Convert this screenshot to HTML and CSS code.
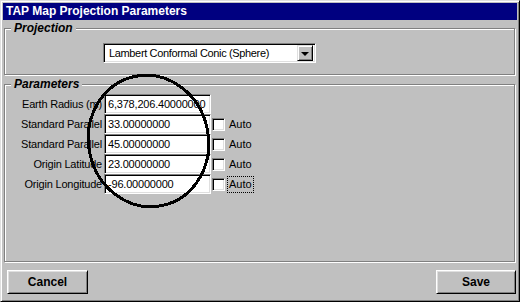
FILE: index.html
```html
<!DOCTYPE html>
<html lang="en">
<head>
  <meta charset="UTF-8">
  <title>TAP Map Projection Parameters</title>
  <link rel="stylesheet" href="styles.css">
</head>
<body>
  <div class="window">
    <div class="titlebar">TAP Map Projection Parameters</div>

    <!-- Projection -->
    <fieldset class="group group-projection">
      <legend>Projection</legend>
      <div class="combo">
        <span class="combo-text">Lambert Conformal Conic (Sphere)</span>
        <span class="combo-btn"><span class="arrow"></span></span>
      </div>
    </fieldset>

    <!-- Parameters -->
    <fieldset class="group group-params">
      <legend>Parameters</legend>
      <div class="param-grid">
        <label class="param-label">Earth Radius (m)</label>
        <input class="field" type="text" value="6,378,206.40000000" readonly>
        <span></span><span></span>

        <label class="param-label">Standard Parallel</label>
        <input class="field" type="text" value="33.00000000" readonly>
        <span class="check"></span><span class="check-label">Auto</span>

        <label class="param-label">Standard Parallel</label>
        <input class="field" type="text" value="45.00000000" readonly>
        <span class="check"></span><span class="check-label">Auto</span>

        <label class="param-label">Origin Latitude</label>
        <input class="field" type="text" value="23.00000000" readonly>
        <span class="check"></span><span class="check-label">Auto</span>

        <label class="param-label">Origin Longitude</label>
        <input class="field" type="text" value="-96.00000000" readonly>
        <span class="check"></span><span class="check-label focused">Auto</span>
      </div>
    </fieldset>

    <div class="actions">
      <button class="btn btn-cancel">Cancel</button>
      <button class="btn btn-save">Save</button>
    </div>

    <!-- hand drawn circle on top of the dialog -->
    <svg class="annotation" width="128" height="140" viewBox="0 0 128 140">
      <ellipse cx="62.5" cy="69" rx="60" ry="66" transform="rotate(-12 62.5 69)" fill="none" stroke="#000" stroke-width="3" shape-rendering="crispEdges"/>
    </svg>
  </div>
</body>
</html>
```

FILE: styles.css
```css
* {
  margin: 0;
  padding: 0;
  box-sizing: border-box;
}
body {
  font-family: 'Liberation Sans', Arial, sans-serif;
  font-size: 11px;
  background: #c0c0c0;
  color: #000;
}
.window {
  position: relative;
  width: 520px;
  height: 302px;
  display: flex;
  flex-direction: column;
  background: #c0c0c0;
  border: 1px solid;
  border-color: #dfdfdf #000 #000 #dfdfdf;
  box-shadow: inset 1px 1px 0 #fff, inset -1px -1px 0 #808080;
  padding: 2px;
}
.titlebar {
  height: 17px;
  line-height: 17px;
  padding-left: 3px;
  background: #000080;
  color: #fff;
  font-weight: bold;
  font-size: 12px;
}
.group {
  min-width: 0;
  margin: 0 2px 0 1px;
  border: 1px solid #808080;
  box-shadow: 1px 1px 0 #fff, inset 1px 1px 0 #fff;
}
.group legend {
  margin-left: 6px;
  padding: 0 3px;
  background: #c0c0c0;
  font-size: 12px;
  line-height: 14px;
  font-weight: bold;
  font-style: italic;
}
.group-projection {
  margin-top: 1px;
  padding: 8px 0 11px 0;
}
.group-params {
  flex: 1;
  margin-top: 2px;
  padding: 3px 0 0 0;
}

/* combo box */
.combo {
  display: flex;
  width: 213px;
  height: 20px;
  margin-left: 98px;
  background: #fff;
  border: 1px solid;
  border-color: #808080 #fff #fff #808080;
  box-shadow: inset 1px 1px 0 #000, inset -1px -1px 0 #dfdfdf;
  padding: 2px 2px 2px 2px;
}
.combo-text {
  flex: 1;
  padding-left: 3px;
  line-height: 14px;
  letter-spacing: -0.35px;
}
.combo-btn {
  width: 16px;
  height: 16px;
  margin-top: -1px;
  display: flex;
  align-items: center;
  justify-content: center;
  background: #c0c0c0;
  border: 1px solid;
  border-color: #dfdfdf #000 #000 #dfdfdf;
  box-shadow: inset 1px 1px 0 #fff, inset -1px -1px 0 #808080;
}
.arrow {
  width: 0;
  height: 0;
  border-left: 4px solid transparent;
  border-right: 4px solid transparent;
  border-top: 4px solid #000;
  margin-top: 1px;
}

/* parameter rows */
.param-grid {
  display: grid;
  grid-template-columns: 99px 108px 17px auto;
  grid-auto-rows: 20px;
  align-items: center;
}
.param-label {
  text-align: right;
  padding-right: 2px;
  letter-spacing: -0.2px;
  white-space: nowrap;
}
.field {
  width: 107px;
  height: 20px;
  font-family: inherit;
  font-size: 11px;
  letter-spacing: -0.2px;
  color: #000;
  background: #fff;
  padding: 0 3px;
  outline: none;
  border: 1px solid;
  border-color: #808080 #fff #fff #808080;
  box-shadow: inset 1px 1px 0 #000, inset -1px -1px 0 #dfdfdf;
}
.check {
  width: 13px;
  height: 13px;
  background: #fff;
  border: 1px solid;
  border-color: #808080 #fff #fff #808080;
  box-shadow: inset 1px 1px 0 #000, inset -1px -1px 0 #dfdfdf;
}
.check-label {
  justify-self: start;
  line-height: 13px;
}
.check-label.focused {
  outline: 1px dotted #000;
  outline-offset: 1px;
}

/* buttons */
.actions {
  display: flex;
  justify-content: space-between;
  margin: 8px 0 5px 0;
  padding: 0 1px 0 4px;
}
.btn {
  height: 24px;
  font-family: inherit;
  font-size: 12px;
  font-weight: bold;
  color: #000;
  background: #c0c0c0;
  border: 1px solid;
  border-color: #fff #000 #000 #fff;
  box-shadow: inset 1px 1px 0 #dfdfdf, inset -1px -1px 0 #808080;
}
.btn-cancel {
  width: 81px;
}
.btn-save {
  width: 80px;
}

.annotation {
  position: absolute;
  left: 85px;
  top: 71px;
}
```
